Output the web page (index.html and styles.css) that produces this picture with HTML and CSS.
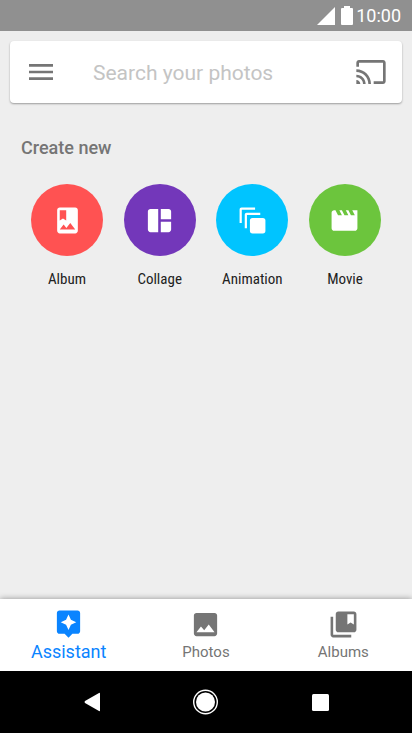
FILE: index.html
```html
<!DOCTYPE html>
<html lang="en">
<head>
    <meta charset="UTF-8">
    <meta name="viewport" content="width=device-width, initial-scale=1.0">
    <title>Photos - Assistant</title>
    <link rel="stylesheet" href="styles.css">
</head>
<body>
    <header class="status-bar">
        <svg width="18" height="18" viewBox="0 0 18 18"><path d="M18 0v18H0z"/></svg>
        <svg class="battery" width="12" height="19" viewBox="0 0 12 19"><path d="M3 0h6v2h2q1 0 1 1v15q0 1-1 1H1q-1 0-1-1V3q0-1 1-1h2z"/></svg>
        <span>10:00</span>
    </header>

    <form class="search" role="search">
        <button type="button" aria-label="Menu">
            <svg width="32" height="32" viewBox="0 0 24 24"><path d="M3 18h18v-2H3v2zm0-5h18v-2H3v2zm0-7v2h18V6H3z"/></svg>
        </button>
        <input type="text" aria-label="Search your photos" placeholder="Search your photos">
        <button type="button" aria-label="Cast">
            <svg width="32" height="32" viewBox="0 0 24 24"><path d="M21 3H3c-1.100 0-2 .9-2 2v3h2V5h18v14h-7v2h7c1.100 0 2-.9 2-2V5c0-1.100-.9-2-2-2zM1 18v3h3c0-1.660-1.340-3-3-3zm0-4v2c2.760 0 5 2.240 5 5h2c0-3.870-3.130-7-7-7zm0-4v2c4.970 0 9 4.030 9 9h2c0-6.080-4.930-11-11-11z"/></svg>
        </button>
    </form>

    <main>
        <h2>Create new</h2>
        <div class="create">
            <button class="album">
                <span class="circle">
                    <svg width="31" height="31" viewBox="0 0 24 24"><path fill-rule="evenodd" d="M18 2H6c-1.100 0-2 .9-2 2v16c0 1.100.9 2 2 2h12c1.100 0 2-.9 2-2V4c0-1.100-.9-2-2-2zM6 4h5v8l-2.500-1.500L6 12V4zm0 15l3-3.860 2.140 2.580 3-3.860L18 19H6z"/></svg>
                </span>
                Album
            </button>
            <button class="collage">
                <span class="circle">
                    <svg width="31" height="31" viewBox="0 0 24 24"><path d="M11 3v18H5c-1.100 0-2-.9-2-2V5c0-1.100.9-2 2-2h6zM13 3h6c1.100 0 2 .9 2 2v6h-8V3zM13 13h8v6c0 1.100-.9 2-2 2h-6v-8z"/></svg>
                </span>
                Collage
            </button>
            <button class="animation">
                <span class="circle">
                    <svg width="31" height="31" viewBox="0 0 24 24"><path d="M14 2v1.700H3.700V14H2V3.500C2 2.600 2.600 2 3.500 2H14zM18 6v1.700H7.700V18H6V7.500C6 6.600 6.600 6 7.500 6H18z"/><rect x="10" y="10" width="12" height="12" rx="2"/></svg>
                </span>
                Animation
            </button>
            <button class="movie">
                <span class="circle">
                    <svg width="31" height="31" viewBox="0 0 24 24"><path d="M18 4l2 4h-3l-2-4h-2l2 4h-3l-2-4H8l2 4H7L5 4H4c-1.100 0-2 .9-2 2v12c0 1.100.9 2 2 2h16c1.100 0 2-.9 2-2V4h-4z"/></svg>
                </span>
                Movie
            </button>
        </div>
    </main>

    <nav class="tabs">
        <a href="#assistant" class="active">
            <svg width="31" height="31" viewBox="0 0 24 24"><path d="M19 2H5c-1.110 0-2 .9-2 2v14c0 1.100.89 2 2 2h4l3 3 3-3h4c1.100 0 2-.9 2-2V4c0-1.100-.9-2-2-2zm-5.120 10.880L12 17l-1.880-4.120L6 11l4.120-1.880L12 5l1.880 4.120L18 11l-4.120 1.880z"/></svg>
            Assistant
        </a>
        <a href="#photos">
            <svg width="31" height="31" viewBox="0 0 24 24"><path d="M21 19V5c0-1.100-.9-2-2-2H5c-1.100 0-2 .9-2 2v14c0 1.100.9 2 2 2h14c1.100 0 2-.9 2-2zM8.500 13.500l2.500 3.010L14.500 12l4.500 6H5l3.500-4.500z"/></svg>
            Photos
        </a>
        <a href="#albums">
            <svg width="31" height="31" viewBox="0 0 24 24"><path fill-rule="evenodd" d="M4 6H2v14c0 1.100.9 2 2 2h14v-2H4V6zM20 2H8c-1.100 0-2 .9-2 2v12c0 1.100.9 2 2 2h12c1.100 0 2-.9 2-2V4c0-1.100-.9-2-2-2zm0 10l-2.500-1.500L15 12V4h5v8z"/></svg>
            Albums
        </a>
    </nav>

    <footer class="system-bar">
        <button aria-label="Back">
            <svg width="26" height="26" viewBox="0 0 26 26"><path d="M21 4.500v17q0 1-1 .5L6 14q-1-1 0-2L20 4q1-.5 1 .5z"/></svg>
        </button>
        <button aria-label="Home">
            <svg width="26" height="26" viewBox="0 0 26 26"><circle cx="12.500" cy="13" r="11.800" fill="none" stroke="#fff" stroke-width="1.400"/><circle cx="12.500" cy="13" r="9.500"/></svg>
        </button>
        <button aria-label="Recent apps">
            <svg width="26" height="26" viewBox="0 0 26 26"><rect x="5" y="5" width="17" height="17" rx="1.500"/></svg>
        </button>
    </footer>
</body>
</html>
```
FILE: styles.css
```css
* { box-sizing: border-box; }
body { margin: 0; min-height: 100vh; display: flex; flex-direction: column; font-family: Roboto, sans-serif; background: #eee; color: #212121; }
button { padding: 0; border: none; background: none; font: inherit; color: inherit; cursor: pointer; }
svg { display: block; fill: currentColor; }

.status-bar { display: flex; align-items: center; justify-content: flex-end; height: 31px; padding-right: 11px; background: #909090; color: #fff; font-size: 18px; }
.battery { margin: 0 3px 0 6px; }

.search { display: flex; align-items: center; height: 62px; margin: 10px 10px 0; padding: 0 15px; background: #fff; border-radius: 4px; box-shadow: 0 1px 2px rgba(0, 0, 0, 0.35); color: #757575; }
.search input { flex: 1; min-width: 0; margin-left: 36px; padding: 2px 0 0; border: none; outline: none; background: none; font: inherit; font-size: 21px; color: #212121; }
.search input::placeholder { color: #c4c4c4; opacity: 1; }

main { flex: 1; }
h2 { margin: 33px 21px 0; font-size: 18px; line-height: 24px; font-weight: 500; color: #757575; }
.create { display: flex; justify-content: space-between; margin: 24px 31px 0; }
.create button { width: 72px; display: flex; flex-direction: column; align-items: center; gap: 13px; font-family: "Roboto Condensed", Roboto, sans-serif; font-size: 15px; line-height: 20px; }
.circle { display: flex; align-items: center; justify-content: center; width: 72px; height: 72px; border-radius: 50%; color: #fff; }
.album .circle { background: #ff5252; }
.collage .circle { background: #7337ba; }
.animation .circle { background: #00c4ff; }
.movie .circle { background: #6cc53d; }

.tabs { display: grid; grid-template-columns: repeat(3, 1fr); height: 72px; background: #fff; box-shadow: 0 0 6px rgba(0, 0, 0, 0.4); }
.tabs a { display: flex; flex-direction: column; align-items: center; padding-top: 10px; font-size: 15px; line-height: 25px; color: #757575; text-decoration: none; }
.tabs .active { padding-top: 9px; font-size: 18px; color: #0a84ff; }

.system-bar { display: grid; grid-template-columns: repeat(3, 114px); justify-content: center; height: 62px; background: #000; color: #fff; z-index: 1; }
.system-bar button { display: flex; align-items: center; justify-content: center; }
```
